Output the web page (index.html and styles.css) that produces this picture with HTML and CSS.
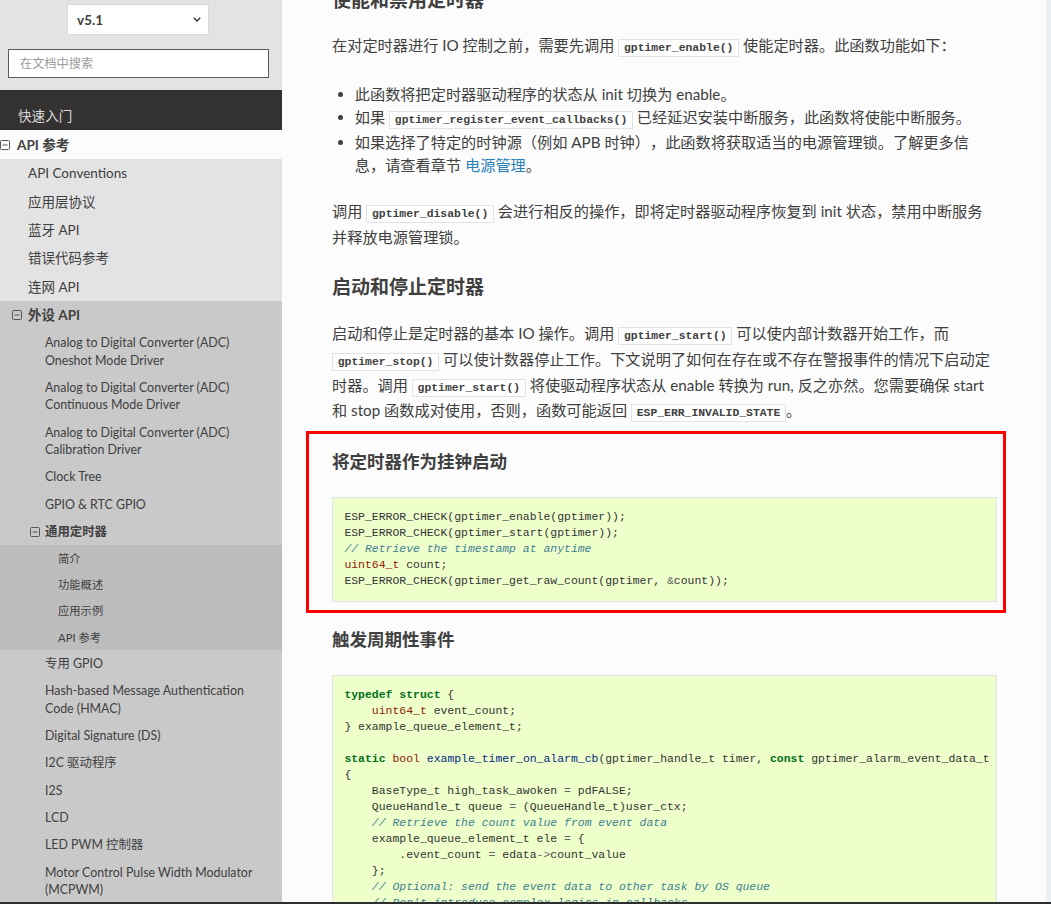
FILE: index.html
```html
<!DOCTYPE html>
<html lang="zh-CN">
<head>
<meta charset="utf-8">
<title>通用定时器</title>
<link rel="stylesheet" href="styles.css">
</head>
<body>
<nav class="sidebar">
  <div class="side-search">
    <div class="version"><span>v5.1</span><svg class="chev" viewBox="0 0 8 5" width="8" height="5"><path d="M0.8 0.8L4 4L7.2 0.8" fill="none" stroke="#333" stroke-width="1.4"/></svg></div>
    <div class="search">在文档中搜索</div>
  </div>
  <div class="menu">
    <a class="l1-link">快速入门</a>
    <div class="l1-current">
      <div class="l1-title"><svg class="tg" viewBox="0 0 10 10" width="10" height="10"><rect x="0.5" y="0.5" width="9" height="9" rx="1" fill="none" stroke="#555"/><path d="M2.5 5h5" stroke="#555"/></svg><span>API 参考</span></div>
      <ul class="l2-list">
        <li>API Conventions</li>
        <li>应用层协议</li>
        <li>蓝牙 API</li>
        <li>错误代码参考</li>
        <li>连网 API</li>
      </ul>
      <div class="l2-current">
        <div class="l2-title"><svg class="tg" viewBox="0 0 10 10" width="10" height="10"><rect x="0.5" y="0.5" width="9" height="9" rx="1" fill="none" stroke="#555"/><path d="M2.5 5h5" stroke="#555"/></svg><span>外设 API</span></div>
        <ul class="l3-list">
          <li>Analog to Digital Converter (ADC) Oneshot Mode Driver</li>
          <li>Analog to Digital Converter (ADC) Continuous Mode Driver</li>
          <li>Analog to Digital Converter (ADC) Calibration Driver</li>
          <li>Clock Tree</li>
          <li>GPIO &amp; RTC GPIO</li>
        </ul>
        <div class="l3-title"><svg class="tg" viewBox="0 0 10 10" width="10" height="10"><rect x="0.5" y="0.5" width="9" height="9" rx="1" fill="none" stroke="#555"/><path d="M2.5 5h5" stroke="#555"/></svg><span>通用定时器</span></div>
        <ul class="l4-list">
          <li>简介</li>
          <li>功能概述</li>
          <li>应用示例</li>
          <li>API 参考</li>
        </ul>
        <ul class="l3-list">
          <li>专用 GPIO</li>
          <li>Hash-based Message Authentication Code (HMAC)</li>
          <li>Digital Signature (DS)</li>
          <li>I2C 驱动程序</li>
          <li>I2S</li>
          <li>LCD</li>
          <li>LED PWM 控制器</li>
          <li>Motor Control Pulse Width Modulator (MCPWM)</li>
          <li>脉冲计数器 (PCNT)</li>
        </ul>
      </div>
    </div>
  </div>
</nav>

<main class="main">
  <h3 class="first">使能和禁用定时器</h3>
  <p>在对定时器进行 IO 控制之前，需要先调用 <code>gptimer_enable()</code> 使能定时器。此函数功能如下：</p>
  <ul class="bullets">
    <li>此函数将把定时器驱动程序的状态从 init 切换为 enable。</li>
    <li>如果 <code>gptimer_register_event_callbacks()</code> 已经延迟安装中断服务，此函数将使能中断服务。</li>
    <li>如果选择了特定的时钟源（例如 APB 时钟），此函数将获取适当的电源管理锁。了解更多信息，请查看章节 <a class="link">电源管理</a>。</li>
  </ul>
  <p>调用 <code>gptimer_disable()</code> 会进行相反的操作，即将定时器驱动程序恢复到 init 状态，禁用中断服务并释放电源管理锁。</p>

  <h3>启动和停止定时器</h3>
  <p>启动和停止是定时器的基本 IO 操作。调用 <code>gptimer_start()</code> 可以使内部计数器开始工作，而 <code>gptimer_stop()</code> 可以使计数器停止工作。下文说明了如何在存在或不存在警报事件的情况下启动定时器。调用 <code>gptimer_start()</code> 将使驱动程序状态从 enable 转换为 run, 反之亦然。您需要确保 start 和 stop 函数成对使用，否则，函数可能返回 <code>ESP_ERR_INVALID_STATE</code>。</p>

  <section class="callout">
    <h4>将定时器作为挂钟启动</h4>
<pre class="code">ESP_ERROR_CHECK(gptimer_enable(gptimer));
ESP_ERROR_CHECK(gptimer_start(gptimer));
<span class="c">// Retrieve the timestamp at anytime</span>
<span class="kt">uint64_t</span> count;
ESP_ERROR_CHECK(gptimer_get_raw_count(gptimer, <span class="o">&amp;</span>count));</pre>
  </section>

  <h4>触发周期性事件</h4>
<pre class="code"><span class="k">typedef</span> <span class="k">struct</span> {
    <span class="kt">uint64_t</span> event_count;
} example_queue_element_t;

<span class="k">static</span> <span class="kt">bool</span> <span class="nf">example_timer_on_alarm_cb</span>(gptimer_handle_t timer, <span class="k">const</span> gptimer_alarm_event_data_t <span class="o">*</span>edata, <span class="kt">void</span> <span class="o">*</span>user_ctx)
{
    BaseType_t high_task_awoken <span class="o">=</span> pdFALSE;
    QueueHandle_t queue <span class="o">=</span> (QueueHandle_t)user_ctx;
    <span class="c">// Retrieve the count value from event data</span>
    example_queue_element_t ele <span class="o">=</span> {
        .event_count <span class="o">=</span> edata<span class="o">-&gt;</span>count_value
    };
    <span class="c">// Optional: send the event data to other task by OS queue</span>
    <span class="c">// Don't introduce complex logics in callbacks</span>
    <span class="c">// Suppose the data won't be corrupted when doing the queue send</span>
    xQueueSendFromISR(queue, <span class="o">&amp;</span>ele, <span class="o">&amp;</span>high_task_awoken);
    <span class="c">// return whether we need to yield at the end of ISR</span>
    <span class="k">return</span> (high_task_awoken <span class="o">==</span> pdTRUE);
}</pre>
</main>
<div class="bottom-edge"></div>
</body>
</html>
```

FILE: styles.css
```css
* { box-sizing: border-box; }

html, body {
  margin: 0;
  padding: 0;
  height: 904px;
  overflow: hidden;
}

body {
  display: flex;
  background: #edf0f2;
  font-family: Lato, "Noto Sans CJK SC", sans-serif;
  color: #404040;
  text-spacing-trim: space-all;
}

/* ---------- sidebar ---------- */
.sidebar {
  width: 282px;
  flex: none;
  height: 904px;
  overflow: hidden;
  background: #343131;
}

.side-search {
  background: #e3e3e3;
  height: 90px;
  padding-top: 4px;
}

.version {
  margin-left: 67px;
  width: 142px;
  height: 31px;
  background: #fff;
  border: 1px solid #d9d9d9;
  display: flex;
  align-items: center;
  justify-content: space-between;
  padding: 0 7px 0 9px;
  font-weight: 700;
  font-size: 13.5px;
  color: #404040;
}

.search {
  margin: 14px 0 0 8px;
  width: 261px;
  height: 29px;
  background: #fff;
  border: 1px solid #5a5a5a;
  padding: 0 0 2px 11px;
  display: flex;
  align-items: center;
  font-size: 12.2px;
  color: #9a9a9a;
}

.menu { padding-top: 12px; }

.l1-link {
  display: block;
  color: #d9d9d9;
  font-size: 13.6px;
  line-height: 18px;
  padding: 5px 18px;
}

.l1-current { background: #fcfcfc; }

.tg { flex: none; display: block; }

.l1-title {
  display: flex;
  align-items: center;
  gap: 7px;
  font-weight: 700;
  font-size: 13.6px;
  line-height: 18px;
  padding: 5.5px 0;
}

.l2-list, .l3-list, .l4-list {
  list-style: none;
  margin: 0;
  padding: 0;
}

.l2-list { background: #e3e3e3; }

.l2-list li {
  font-size: 13.5px;
  line-height: 18px;
  padding: 5.175px 19px 5.175px 28px;
}

.l2-current { background: #c9c9c9; }

.l2-title {
  display: flex;
  align-items: center;
  gap: 6px;
  font-weight: 700;
  font-size: 13.5px;
  line-height: 18px;
  padding: 5.25px 0 5.25px 12px;
}

.l3-list li {
  font-size: 12.4px;
  line-height: 17.5px;
  padding: 4.9px 19px 4.9px 45px;
}

.l3-title {
  display: flex;
  align-items: center;
  gap: 5px;
  font-weight: 700;
  font-size: 12.4px;
  line-height: 17.5px;
  padding: 4.9px 0 4.9px 30px;
}

.l4-list { background: #bdbdbd; }

.l4-list li {
  font-size: 11.3px;
  line-height: 17px;
  padding: 4.6px 19px 4.6px 58px;
}

/* ---------- main content ---------- */
.main {
  width: 764px;
  flex: none;
  height: 904px;
  overflow: hidden;
  background: #fcfcfc;
  padding: 0 49px 0 50px;
  font-size: 15.2px;
  line-height: 22.8px;
}

h3, h4 {
  margin: 0;
  font-weight: 700;
  color: #404040;
}

h3 {
  font-size: 19px;
  line-height: 32px;
  margin-bottom: 18.7px;
}

h3.first { margin-top: -16.4px; }

h4 {
  font-size: 17.5px;
  line-height: 30px;
  margin-bottom: 20px;
}

p { margin: 0 0 22.8px; }

.bullets {
  margin: 0 0 22.8px;
  padding-left: 22.8px;
  list-style: disc;
}

.link { color: #2980b9; }

code {
  font-family: "Liberation Mono", monospace;
  font-size: 11.4px;
  line-height: 21.8px;
  font-weight: 700;
  color: #404040;
  background: #fff;
  border: 1px solid #e1e4e5;
  padding: 2px 4.75px;
}

.callout {
  margin: -16.5px -9px 12.5px -26px;
  border: 3px solid #ff0000;
  padding: 13px 6px 7.3px 23px;
}

.callout .code { margin-bottom: 0; }

.code {
  margin: 0 0 22.8px;
  background: #eeffcc;
  border: 1px solid #e1e4e5;
  padding: 11px 11.4px 11.8px;
  font-family: "Liberation Mono", monospace;
  font-size: 11.45px;
  line-height: 16px;
  color: #333;
  white-space: pre;
  overflow: hidden;
}

.code .c { color: #408090; font-style: italic; }
.code .k { color: #007020; font-weight: 700; }
.code .kt { color: #902000; }
.code .nf { color: #06287e; }
.code .o { color: #666; }

.bottom-edge {
  position: fixed;
  left: 0;
  right: 0;
  bottom: 0;
  height: 2px;
  background: #2e2e2e;
}
```
